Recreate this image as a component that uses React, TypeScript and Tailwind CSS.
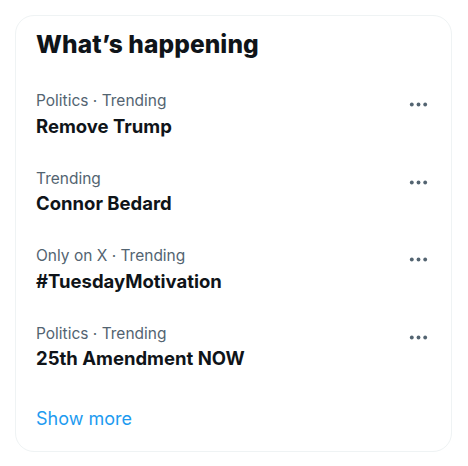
import React from "react";

const items = [
  { meta: "Politics · Trending", title: "Remove Trump" },
  { meta: "Trending", title: "Connor Bedard" },
  { meta: "Only on X · Trending", title: "#TuesdayMotivation" },
  { meta: "Politics · Trending", title: "25th Amendment NOW" },
];

function Dots() {
  return (
    <svg viewBox="0 0 24 24" className="w-[23px] h-[23px] fill-[#536471]">
      <circle cx="5" cy="12" r="2" />
      <circle cx="12" cy="12" r="2" />
      <circle cx="19" cy="12" r="2" />
    </svg>
  );
}

export default function App() {
  return (
    <div className="w-[468px] h-[466px] bg-white p-[15px] pr-[16px]" style={{ fontFamily: "Inter, 'Noto Sans', sans-serif" }}>
      <div className="w-[437px] h-[437px] border border-[#eff3f4] rounded-[19px] flex flex-col">
        <div className="px-[20px] pt-[14px] pb-[18px]">
          <h2 className="text-[24.5px] leading-[29px] font-extrabold text-[#0f1419] tracking-[0.1px]">What’s happening</h2>
        </div>
        {items.map((it, i) => (
          <div key={i} className="flex justify-between px-[20px] pt-[14px] pb-[17px]">
            <div className="flex flex-col">
              <span className="text-[15.5px] leading-[20px] text-[#536471]">{it.meta}</span>
              <span className="text-[18.5px] leading-[24px] font-bold text-[#0f1419] mt-[2.5px]">{it.title}</span>
            </div>
            <div className="mr-[1px] mt-[2px]">
              <Dots />
            </div>
          </div>
        ))}
        <div className="px-[20px] pt-[20px]">
          <span className="text-[18px] leading-[24px] text-[#1d9bf0]">Show more</span>
        </div>
      </div>
    </div>
  );
}
